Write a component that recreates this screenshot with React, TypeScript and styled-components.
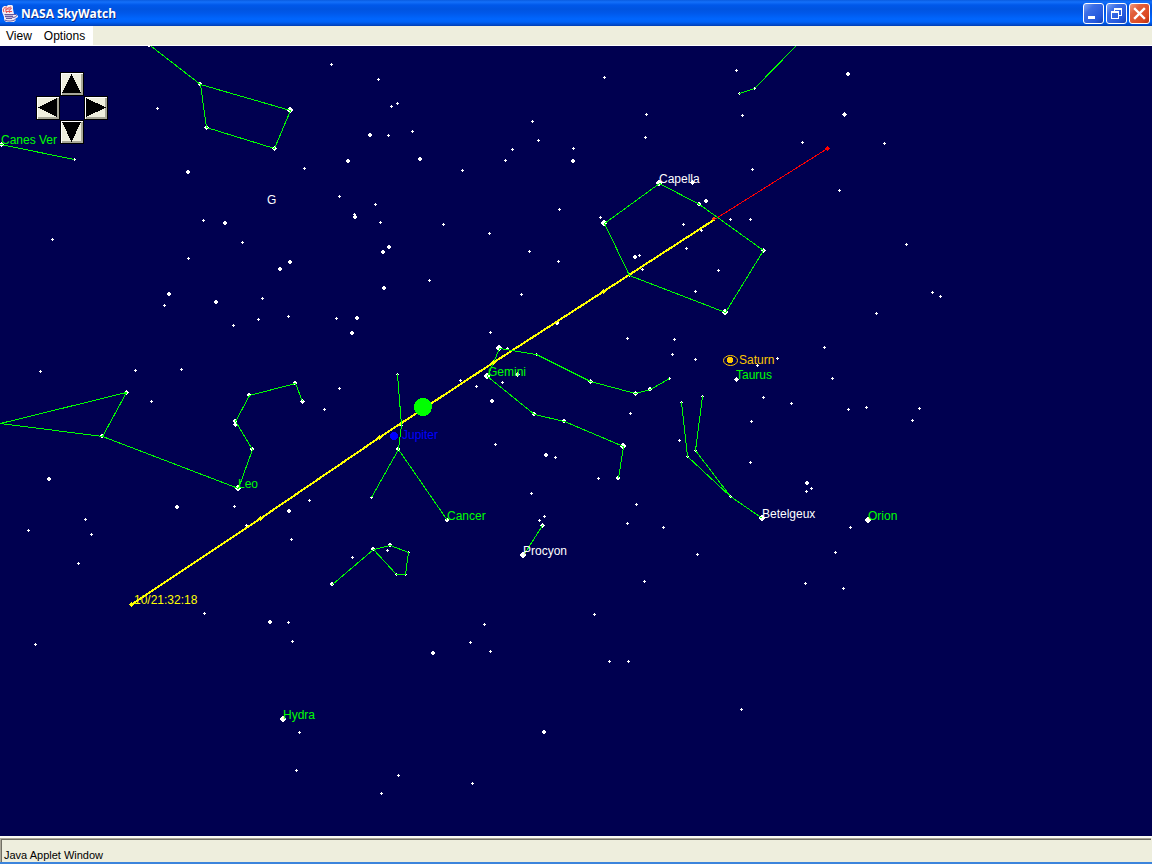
import React from "react";
import styled, { createGlobalStyle } from "styled-components";

const GlobalStyle = createGlobalStyle`
  * { box-sizing: border-box; }
  body { margin: 0; font-family: "Liberation Sans", Arial, sans-serif; font-size: 12px; color: #000; }
`;

const Window = styled.div`
  display: flex;
  flex-direction: column;
  min-height: 100vh;
  background: #eeeedd;
`;

const TitleBar = styled.header`
  display: flex;
  align-items: center;
  gap: 3px;
  height: 26px;
  padding: 0 2px;
  background: linear-gradient(
    to bottom,
    #0a5ce0 0,
    #1470fa 2px,
    #0058ea 5px,
    #0054e0 9px,
    #0058ea 13px,
    #0066fe 19px,
    #0062f6 22px,
    #0048c8 25px,
    #003cb0 26px
  );
`;

const Title = styled.h1`
  flex: 1;
  margin: 0;
  padding-top: 1px;
  font: 700 12px/25px "Open Sans", "Noto Sans", sans-serif;
  color: #fff;
  text-shadow: 1px 1px 0 #0a2a88;
`;

const WindowButtons = styled.div`
  display: flex;
  gap: 2px;
`;

const WindowButton = styled.button<{ $danger?: boolean }>`
  width: 21px;
  height: 21px;
  padding: 0;
  border: 1px solid #fff;
  border-radius: 3px;
  background: ${(p) =>
    p.$danger
      ? "linear-gradient(135deg, #f09a80 0, #e2603c 30%, #dc4820 75%, #b83010 100%)"
      : "linear-gradient(135deg, #7fa4f4 0, #3c6ee6 30%, #2458dc 75%, #1440b4 100%)"};
  svg { display: block; }
`;

const MenuBar = styled.nav`
  display: flex;
  height: 20px;
  border-bottom: 1px solid #fff;
`;

const Menus = styled.div`
  display: flex;
  padding-right: 2px;
  background: #fff;
`;

const MenuItem = styled.button`
  padding: 1px 6px 0;
  border: 0;
  background: #fff;
  font: 12px/18px "Liberation Sans", Arial, sans-serif;
  color: #000;
`;

const Sky = styled.main`
  position: relative;
  flex: 1;
  padding: 26px 36px;
  background: #000050;
  overflow: hidden;
`;

const Chart = styled.svg`
  position: absolute;
  inset: 0;
  width: 100%;
  height: 100%;
  text { font: 12px "Liberation Sans", Arial, sans-serif; }
`;

const Pad = styled.div`
  position: relative;
  display: grid;
  grid-template: repeat(3, 24px) / repeat(3, 24px);
  grid-template-areas: ". up ." "left . right" ". down .";
`;

const PadButton = styled.button<{ $area: string }>`
  grid-area: ${(p) => p.$area};
  padding: 0;
  border: 1px solid #000;
  background: #eeeedd;
  box-shadow: inset 1px 1px 0 #fff, inset -2px -2px 0 #a8a898;
  svg { display: block; }
`;

const StatusBar = styled.footer`
  padding-right: 1px;
  border-top: 2px solid #fbfbf4;
  border-bottom: 2px solid #3c84dc;
`;

const StatusFrame = styled.div`
  border: solid #aca899;
  border-width: 1px 0 0 1px;
`;

const StatusText = styled.p`
  margin: 0;
  padding: 9px 2px 0;
  border: solid #716f64;
  border-width: 1px 0 0 1px;
  font-size: 11px;
  line-height: 13px;
`;

type Point = [number, number];

/* Faint stars, drawn as a three pixel cross. */
const FAINT: Point[] = [
  [331, 64], [378, 79], [397, 103], [391, 106], [157, 108], [412, 131], [388, 135], [304, 168],
  [339, 196], [375, 204], [354, 214], [380, 222], [203, 220], [242, 242], [188, 258], [262, 298],
  [164, 305], [258, 319], [288, 316], [233, 325], [336, 318], [429, 280], [604, 77], [532, 121],
  [538, 140], [512, 149], [505, 160], [573, 148], [462, 170], [559, 209], [600, 217], [443, 224],
  [489, 233], [529, 251], [558, 261], [521, 294], [490, 332], [627, 338], [736, 70], [742, 115],
  [646, 114], [645, 137], [802, 142], [752, 169], [839, 190], [730, 219], [750, 219], [683, 224],
  [701, 230], [686, 248], [639, 255], [642, 269], [718, 270], [695, 291], [876, 313], [674, 339],
  [884, 143], [906, 244], [932, 292], [940, 296], [52, 239], [672, 354], [695, 359], [777, 358],
  [757, 365], [824, 347], [832, 378], [763, 397], [791, 403], [848, 409], [866, 407], [919, 408],
  [912, 420], [751, 421], [630, 413], [679, 440], [750, 462], [811, 488], [806, 491], [598, 478],
  [636, 504], [627, 523], [663, 527], [850, 527], [835, 552], [697, 554], [644, 581], [805, 583],
  [843, 588], [339, 388], [324, 409], [460, 380], [476, 386], [502, 382], [507, 348], [495, 444],
  [555, 457], [531, 493], [544, 516], [539, 520], [309, 500], [352, 557], [387, 550], [594, 614],
  [40, 371], [135, 370], [181, 369], [151, 401], [234, 506], [246, 525], [291, 539], [85, 519],
  [91, 534], [28, 530], [78, 563], [204, 613], [35, 644], [288, 622], [292, 641], [299, 732],
  [296, 770], [484, 624], [470, 642], [490, 651], [609, 661], [628, 661], [741, 709], [398, 775],
  [381, 793], [472, 783], [74, 159], [754, 88], [739, 93], [681, 402], [687, 456], [695, 450],
  [702, 396], [730, 496], [669, 378], [536, 354], [397, 374], [401, 425], [371, 497], [408, 552],
  [405, 574], [396, 574], [629, 275],
];

/* Medium stars, four pixels across with the corners cut. */
const MEDIUM: Point[] = [
  [370, 135], [348, 161], [420, 159], [188, 172], [355, 217], [225, 223], [389, 247], [383, 252],
  [290, 262], [280, 269], [169, 294], [216, 302], [384, 288], [357, 318], [352, 333], [573, 161],
  [557, 323], [848, 74], [635, 257], [706, 201], [699, 204], [807, 483], [492, 401], [546, 455],
  [49, 479], [177, 507], [289, 511], [270, 622], [433, 653], [544, 732], [149, 45], [200, 84],
  [650, 389], [618, 478], [534, 414], [564, 421], [398, 449], [447, 520], [332, 584], [373, 549],
  [390, 545], [102, 436], [252, 449], [249, 395], [295, 383], [235, 421],
];

/* Stars drawn as a five pixel diamond. */
const DIAMOND: Point[] = [
  [844, 114], [692, 182], [763, 250], [736, 379], [517, 374], [590, 381], [635, 393], [542, 525],
  [126, 392], [235, 424], [302, 401], [206, 127], [274, 148], [1, 144],
];

/* The brightest stars. */
const BRIGHT: Point[] = [
  [290, 110], [604, 223], [659, 183], [725, 312], [868, 520], [762, 518], [623, 446], [499, 348],
  [487, 376], [523, 555], [283, 719], [238, 488],
];

const shapes = {
  faint: "m-1 0h1v-1h1v1h1v1h-1v1h-1v-1h-1z",
  medium: "m-1 -2h2v1h1v2h-1v1h-2v-1h-1v-2h1z",
  diamond: "m0 -2h1v1h1v1h1v1h-1v1h-1v1h-1v-1h-1v-1h-1v-1h1v-1h1z",
  bright: "m-1 -3h2v1h1v1h1v2h-1v1h-1v1h-2v-1h-1v-1h-1v-2h1v-1h1z",
};

const stamp = (points: Point[], shape: string) =>
  points.map(([x, y]) => `M${x} ${y}${shape}`).join("");

const CONSTELLATIONS = [
  "151,46 200,84 206,127 274,148 290,110 200,84",
  "0,144 74,159",
  "795,46 754,88 739,93",
  "659,183 699,204 763,250 725,312 629,275 604,223 659,183",
  "126,392 0,423 102,436 126,392",
  "102,436 238,488 252,449 235,421 249,395 295,383 302,401",
  "397,374 401,425 398,449 371,497",
  "398,449 447,520",
  "618,478 623,446 564,421 534,414 487,376 499,348 536,354 590,381 635,393 650,389 669,378",
  "332,584 373,549 390,545 408,552 405,574 396,574 373,549",
  "523,555 542,525",
  "681,402 687,456 730,496 762,518",
  "702,396 695,450 730,496",
];

const TRACK: Point[] = [[131, 604], [260, 518], [379, 437], [493, 362], [603, 291], [714, 219]];

const LABELS: { text: string; x: number; y: number; color: string }[] = [
  { text: "Canes Ver", x: 1, y: 144, color: "#00ff00" },
  { text: "G", x: 267, y: 204, color: "#ffffff" },
  { text: "Capella", x: 659, y: 183, color: "#ffffff" },
  { text: "Saturn", x: 739, y: 364, color: "#ffc800" },
  { text: "Taurus", x: 736, y: 379, color: "#00ff00" },
  { text: "Gemini", x: 488, y: 376, color: "#00ff00" },
  { text: "Jupiter", x: 402, y: 439, color: "#0000ff" },
  { text: "Leo", x: 238, y: 488, color: "#00ff00" },
  { text: "Cancer", x: 447, y: 520, color: "#00ff00" },
  { text: "Procyon", x: 523, y: 555, color: "#ffffff" },
  { text: "Betelgeux", x: 762, y: 518, color: "#ffffff" },
  { text: "Orion", x: 868, y: 520, color: "#00ff00" },
  { text: "10/21:32:18", x: 134, y: 604, color: "#ffff00" },
  { text: "Hydra", x: 283, y: 719, color: "#00ff00" },
];

const ARROWS = [
  { area: "up", label: "Look up", points: "10.5,1 20,20 1,20" },
  { area: "left", label: "Look left", points: "1,10.5 20,1 20,20" },
  { area: "right", label: "Look right", points: "21,10.5 1,1 1,20" },
  { area: "down", label: "Look down", points: "10.5,21 20,1 1,1" },
];

function JavaIcon() {
  return (
    <svg width="16" height="17" viewBox="0 0 16 17" aria-hidden="true">
      <path d="M2 1h3l1-1h4l1 1v3l1 5h2l2 2v1l-3 2 1 1-2 2H4l-2-2v-3L0 7V3z" fill="#f2ecf6" />
      <path
        d="M2 7c-2-3 1-5 3-5M5 8c-3-3 0-5 4-6M8 8c-2-2 0-4 2-5M3 4h6M4 6.500h6"
        fill="none"
        stroke="#e65050"
        strokeWidth="1"
      />
      <path d="M3 9h8v4l-2 1H5l-2-2z" fill="#c0b4d8" />
      <path
        d="M2.500 9.500h9M11 9.500h3l.5 1-1 1.500-3 .5M3 11.500h8M4 13.500h6M2.500 15c3 1.500 8 1.500 11-.5"
        fill="none"
        stroke="#66589c"
        strokeWidth="1"
      />
    </svg>
  );
}

function StarChart() {
  return (
    <Chart role="img" aria-label="Sky chart">
      <g transform="translate(0 -46)">
        <g fill="#fff" shapeRendering="crispEdges">
          <path d={stamp(FAINT, shapes.faint)} />
          <path d={stamp(MEDIUM, shapes.medium)} />
          <path d={stamp(DIAMOND, shapes.diamond)} />
          <path d={stamp(BRIGHT, shapes.bright)} />
        </g>
        <g fill="none" shapeRendering="crispEdges" transform="translate(.5 .5)">
          <polyline points={TRACK.join(" ")} stroke="#ffff00" strokeWidth="2" />
          <path d="M714 219L827 148" stroke="#ff0000" />
          {CONSTELLATIONS.map((points) => (
            <polyline key={points} points={points} stroke="#00ff00" />
          ))}
        </g>
        <g shapeRendering="crispEdges">
          <path d={stamp(TRACK.slice(0, -1), shapes.diamond)} fill="#ffff00" />
          <path d={stamp([[827, 148]], shapes.diamond)} fill="#ff0000" />
          <path d="M713 217h2v1h1v1h-2v1h-2v-2h1z" fill="#ff5000" />
          <circle cx="423" cy="407" r="9" fill="#00ff00" />
          <circle cx="394" cy="436" r="4" fill="#0000ff" />
          <circle cx="730" cy="360" r="3" fill="#ffc800" />
        </g>
        <ellipse cx="730.5" cy="360.5" rx="7" ry="5" fill="none" stroke="#ffc800" />
        {LABELS.map((l) => (
          <text key={l.text} x={l.x} y={l.y} fill={l.color}>
            {l.text}
          </text>
        ))}
      </g>
    </Chart>
  );
}

export default function App() {
  return (
    <Window>
      <GlobalStyle />
      <TitleBar>
        <JavaIcon />
        <Title>NASA SkyWatch</Title>
        <WindowButtons>
          <WindowButton aria-label="Minimize">
            <svg width="19" height="19">
              <path d="M4 12h7v3H4z" fill="#fff" />
            </svg>
          </WindowButton>
          <WindowButton aria-label="Restore">
            <svg width="19" height="19" shapeRendering="crispEdges" fill="#fff">
              <path d="M7 4h8v8h-3v-1h2V6H8v1H7z" />
              <path fillRule="evenodd" d="M4 7h8v8H4zM5 9v5h6V9z" />
            </svg>
          </WindowButton>
          <WindowButton $danger aria-label="Close">
            <svg width="19" height="19">
              <path d="M5 5l9 9M14 5l-9 9" stroke="#fff" strokeWidth="2.4" strokeLinecap="square" />
            </svg>
          </WindowButton>
        </WindowButtons>
      </TitleBar>
      <MenuBar>
        <Menus>
          <MenuItem>View</MenuItem>
          <MenuItem>Options</MenuItem>
        </Menus>
      </MenuBar>
      <Sky>
        <StarChart />
        <Pad>
          {ARROWS.map((a) => (
            <PadButton key={a.area} $area={a.area} aria-label={a.label}>
              <svg width="22" height="22" shapeRendering="crispEdges">
                <polygon points={a.points} />
              </svg>
            </PadButton>
          ))}
        </Pad>
      </Sky>
      <StatusBar>
        <StatusFrame>
          <StatusText>Java Applet Window</StatusText>
        </StatusFrame>
      </StatusBar>
    </Window>
  );
}
